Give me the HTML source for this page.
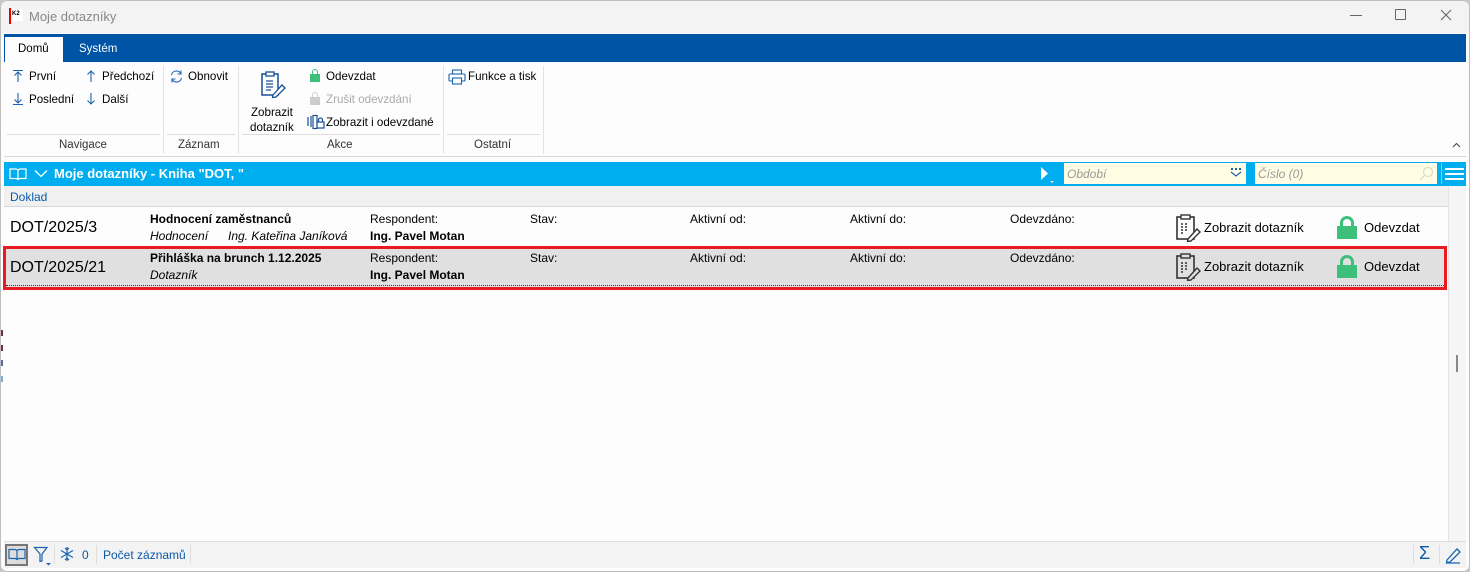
<!DOCTYPE html>
<html><head><meta charset="utf-8"><style>
*{margin:0;padding:0;box-sizing:border-box}
body{width:1470px;height:572px;overflow:hidden;background:#c8c8c8;font-family:"Liberation Sans","DejaVu Sans",sans-serif;font-size:12px;color:#000;position:relative}
.a{position:absolute;white-space:nowrap}
.win{position:absolute;left:0;top:0;width:1470px;height:572px;background:#fdfdfd;border-radius:7px;overflow:hidden}
.bd{position:absolute;left:0;top:0;width:1470px;height:572px;border:1px solid #bdbdbd;border-radius:7px;pointer-events:none}
.lbl{font-size:11.5px;color:#333}
.blue{color:#0a5aa8}
.s{font-size:11.6px}
svg{position:absolute}
</style></head><body>
<div class="win">
<div class="a" style="left:0;top:0;width:1470px;height:33px;background:#f3f3f3"></div>
<div class="a" style="left:9px;top:8px;width:2px;height:16px;background:#e00"></div>
<div class="a" style="left:12px;top:9px;width:11px;height:12px;background:#fff;font-size:6px;font-weight:bold;line-height:11px">K2</div>
<div class="a" style="left:29px;top:9px;font-size:13px;color:#888">Moje dotazníky</div>
<div class="a" style="left:1350px;top:15px;width:12px;height:1px;background:#666"></div>
<div class="a" style="left:1395px;top:9px;width:11px;height:11px;border:1px solid #666;border-radius:1px"></div>
<svg style="left:1440px;top:9px" width="12" height="12"><path d="M1 1L11 11M11 1L1 11" stroke="#666" stroke-width="1.1"/></svg>
<div class="a" style="left:4px;top:34px;width:1462px;height:28px;background:#0054a6"></div>
<div class="a" style="left:5px;top:37px;width:58px;height:25px;background:#fdfdfd"></div>
<div class="a" style="left:18px;top:43px;font-size:11.5px">Domů</div>
<div class="a" style="left:79px;top:43px;font-size:11.5px;color:#fff">Systém</div>
<div class="a" style="left:4px;top:62px;width:1462px;height:95px;background:#fdfdfd;border-bottom:1px solid #d8d8d8"></div>
<div class="a" style="left:163px;top:66px;width:1px;height:88px;background:#e2e2e2"></div>
<div class="a" style="left:238px;top:66px;width:1px;height:88px;background:#e2e2e2"></div>
<div class="a" style="left:443px;top:66px;width:1px;height:88px;background:#e2e2e2"></div>
<div class="a" style="left:543px;top:66px;width:1px;height:88px;background:#e2e2e2"></div>
<div class="a" style="left:7px;top:134px;width:153px;height:1px;background:#ddd"></div>
<div class="a" style="left:167px;top:134px;width:68px;height:1px;background:#ddd"></div>
<div class="a" style="left:242px;top:134px;width:198px;height:1px;background:#ddd"></div>
<div class="a" style="left:447px;top:134px;width:93px;height:1px;background:#ddd"></div>
<div class="a lbl" style="left:59px;top:139px">Navigace</div>
<div class="a lbl" style="left:178px;top:139px">Záznam</div>
<div class="a lbl" style="left:327px;top:139px">Akce</div>
<div class="a lbl" style="left:474px;top:139px">Ostatní</div>
<svg style="left:12px;top:69px" width="12" height="14"><path d="M1 1.5H11M6 3V13M2.5 6.5L6 3L9.5 6.5" stroke="#1a63b0" fill="none" stroke-width="1.1"/></svg>
<div class="a s" style="left:29px;top:70px">První</div>
<svg style="left:12px;top:92px" width="12" height="14"><path d="M1 12.5H11M6 1V11M2.5 7.5L6 11L9.5 7.5" stroke="#1a63b0" fill="none" stroke-width="1.1"/></svg>
<div class="a s" style="left:29px;top:93px">Poslední</div>
<svg style="left:85px;top:69px" width="12" height="14"><path d="M6 2V13M2.5 5.5L6 2L9.5 5.5" stroke="#1a63b0" fill="none" stroke-width="1.1"/></svg>
<div class="a s" style="left:102px;top:70px">Předchozí</div>
<svg style="left:85px;top:92px" width="12" height="14"><path d="M6 1V12M2.5 8.5L6 12L9.5 8.5" stroke="#1a63b0" fill="none" stroke-width="1.1"/></svg>
<div class="a s" style="left:102px;top:93px">Další</div>
<svg style="left:169px;top:69px" width="15" height="15"><path d="M2.5 6A5 5 0 0 1 12 5M12.5 9A5 5 0 0 1 3 10M12 1.5V5H8.5M3 13.5V10H6.5" stroke="#1a63b0" fill="none" stroke-width="1.1"/></svg>
<div class="a s" style="left:188px;top:70px">Obnovit</div>
<svg style="left:259px;top:71px" width="28" height="28"><rect x="3" y="3" width="16" height="21" fill="none" stroke="#1a4f96" stroke-width="1.5"/><rect x="7" y="1" width="8" height="4" fill="#fff" stroke="#1a4f96" stroke-width="1.3"/><path d="M7 10h7M7 13h7M7 16h7M7 19h5" stroke="#1a4f96" stroke-width="1.2"/><path d="M14 24L23 14L26 17L17 26L13.5 26.5Z" fill="#fff" stroke="#1a4f96" stroke-width="1.3"/></svg>
<div class="a s" style="left:250px;top:105px;text-align:center;line-height:15px">Zobrazit<br>dotazník</div>
<div class="a" style="left:310px;top:69px;width:10px;height:13px"><div style="position:absolute;left:2px;top:0;width:6px;height:7px;border:1.5px solid #3cc07a;border-bottom:none;border-radius:3px 3px 0 0"></div><div style="position:absolute;left:0;top:5px;width:10px;height:8px;background:#3cc07a"></div></div>
<div class="a s" style="left:326px;top:70px">Odevzdat</div>
<div class="a" style="left:310px;top:92px;width:10px;height:13px"><div style="position:absolute;left:2px;top:0;width:6px;height:7px;border:1.5px solid #ccc;border-bottom:none;border-radius:3px 3px 0 0"></div><div style="position:absolute;left:0;top:5px;width:10px;height:8px;background:#ccc"></div></div>
<div class="a s" style="left:326px;top:93px;color:#aaa">Zrušit odevzdání</div>
<svg style="left:305px;top:114px" width="20" height="16"><path d="M3 3V12M6 2V13" stroke="#1a4f96" fill="none" stroke-width="1.2"/><rect x="8" y="1.5" width="4" height="13" fill="none" stroke="#1a4f96" stroke-width="1.2"/><rect x="12" y="8" width="7" height="6" fill="#fff" stroke="#1a4f96" stroke-width="1.2"/><path d="M13.5 8V6a2 2 0 0 1 4 0V8" fill="none" stroke="#1a4f96" stroke-width="1.2"/></svg>
<div class="a s" style="left:326px;top:116px">Zobrazit i odevzdané</div>
<svg style="left:448px;top:69px" width="18" height="16"><rect x="4.5" y="1" width="9" height="4" fill="none" stroke="#1a63b0" stroke-width="1.1"/><rect x="1" y="5" width="16" height="7" rx="1" fill="none" stroke="#1a63b0" stroke-width="1.1"/><rect x="4.5" y="9" width="9" height="6" fill="#fff" stroke="#1a63b0" stroke-width="1.1"/></svg>
<div class="a s" style="left:468px;top:70px">Funkce a tisk</div>
<svg style="left:1452px;top:142px" width="9" height="6"><path d="M1 5L4.5 1.5L8 5" stroke="#444" fill="none"/></svg>
<div class="a" style="left:4px;top:162px;width:1462px;height:24px;background:#00aeef"></div>
<svg style="left:9px;top:167px" width="18" height="15"><path d="M1 2H7a2 2 0 0 1 2 2V13a2 2 0 0 0-2-1.5H1ZM17 2H11a2 2 0 0 0-2 2V13a2 2 0 0 1 2-1.5H17Z" fill="none" stroke="#fff" stroke-width="1.2"/></svg>
<svg style="left:34px;top:169px" width="14" height="9"><path d="M1 1.5L7 7.5L13 1.5" stroke="#fff" fill="none" stroke-width="1.3"/></svg>
<div class="a" style="left:54px;top:166px;font-size:13px;font-weight:bold;color:#fff">Moje dotazníky - Kniha "DOT, "</div>
<svg style="left:1040px;top:166px" width="16" height="18"><path d="M1 1L8 7.5L1 14Z" fill="#fff"/><path d="M10 15H14L12 17Z" fill="#fff"/></svg>
<div class="a" style="left:1064px;top:163px;width:182px;height:21px;background:#fffde3"></div>
<div class="a" style="left:1067px;top:167px;font-style:italic;color:#999">Období</div>
<svg style="left:1229px;top:167px" width="14" height="10"><path d="M2 1h2v2H2zM6 1h2v2H6zM10 1h2v2h-2z" fill="#1a63b0"/><path d="M2 5L7 9L12 5" stroke="#1a63b0" fill="none" stroke-width="1.2"/></svg>
<div class="a" style="left:1255px;top:163px;width:182px;height:21px;background:#fffde3"></div>
<div class="a" style="left:1258px;top:167px;font-style:italic;color:#999">Číslo (0)</div>
<svg style="left:1419px;top:166px" width="15" height="15"><circle cx="9" cy="6" r="4.5" fill="none" stroke="#dcdcc0" stroke-width="1.2"/><path d="M5.5 9.5L1.5 13.5" stroke="#dcdcc0" stroke-width="1.4"/></svg>
<div class="a" style="left:1441px;top:163px;width:1px;height:21px;background:#6fd0f6"></div>
<div class="a" style="left:1445px;top:168px;width:19px;height:2px;background:#fff"></div>
<div class="a" style="left:1445px;top:173px;width:19px;height:2px;background:#fff"></div>
<div class="a" style="left:1445px;top:178px;width:19px;height:2px;background:#fff"></div>
<div class="a" style="left:4px;top:186px;width:1444px;height:21px;background:#f0f0f0;border-bottom:1px solid #d6d6d6"></div>
<div class="a blue" style="left:10px;top:190px">Doklad</div>
<div class="a" style="left:1448px;top:186px;width:18px;height:355px;background:#f5f5f5;border-left:1px solid #e4e4e4"></div>
<div class="a" style="left:1456px;top:355px;width:2px;height:17px;background:#888"></div>
<div class="a" style="left:0;top:330px;width:3px;height:6px;background:#7a2a50"></div>
<div class="a" style="left:0;top:345px;width:3px;height:6px;background:#7a2a50"></div>
<div class="a" style="left:0;top:360px;width:3px;height:6px;background:#5a6a9a"></div>
<div class="a" style="left:0;top:376px;width:3px;height:6px;background:#7ab0d8"></div>
<div class="a" style="left:3px;top:246px;width:1444px;height:44px;border:3px solid #e81b23;background:#e0e0e0"></div>
<div class="a" style="left:6px;top:285px;width:1438px;height:1px;border-top:1px dotted #333"></div>
<div class="a" style="left:10px;top:219px;font-size:16px">DOT/2025/3</div>
<div class="a" style="left:150px;top:212px;font-weight:bold">Hodnocení zaměstnanců</div>
<div class="a" style="left:150px;top:229px;font-style:italic">Hodnocení</div>
<div class="a" style="left:228px;top:229px;font-style:italic">Ing. Kateřina Janíková</div>
<div class="a" style="left:370px;top:212px">Respondent:</div>
<div class="a" style="left:370px;top:229px;font-weight:bold">Ing. Pavel Motan</div>
<div class="a" style="left:530px;top:212px">Stav:</div>
<div class="a" style="left:690px;top:212px">Aktivní od:</div>
<div class="a" style="left:850px;top:212px">Aktivní do:</div>
<div class="a" style="left:1010px;top:212px">Odevzdáno:</div>
<div class="a" style="left:10px;top:259px;font-size:16px">DOT/2025/21</div>
<div class="a" style="left:150px;top:251px;font-weight:bold">Přihláška na brunch 1.12.2025</div>
<div class="a" style="left:150px;top:268px;font-style:italic">Dotazník</div>
<div class="a" style="left:370px;top:251px">Respondent:</div>
<div class="a" style="left:370px;top:268px;font-weight:bold">Ing. Pavel Motan</div>
<div class="a" style="left:530px;top:251px">Stav:</div>
<div class="a" style="left:690px;top:251px">Aktivní od:</div>
<div class="a" style="left:850px;top:251px">Aktivní do:</div>
<div class="a" style="left:1010px;top:251px">Odevzdáno:</div>
<svg style="left:1175px;top:214px" width="28" height="28"><rect x="2" y="3" width="17" height="22" fill="none" stroke="#333" stroke-width="1.6"/><rect x="6" y="1" width="9" height="4" fill="#fff" stroke="#333" stroke-width="1.4"/><path d="M6 10h2M10 10h2M6 13h2M10 13h2M6 16h2M10 16h2M6 19h2" stroke="#333" stroke-width="1.4"/><path d="M13 25L22 15L25 18L16 27L12.5 27.5Z" fill="#fff" stroke="#333" stroke-width="1.4"/></svg>
<div class="a" style="left:1204px;top:220px;font-size:13px">Zobrazit dotazník</div>
<svg style="left:1175px;top:253px" width="28" height="28"><rect x="2" y="3" width="17" height="22" fill="none" stroke="#333" stroke-width="1.6"/><rect x="6" y="1" width="9" height="4" fill="#e0e0e0" stroke="#333" stroke-width="1.4"/><path d="M6 10h2M10 10h2M6 13h2M10 13h2M6 16h2M10 16h2M6 19h2" stroke="#333" stroke-width="1.4"/><path d="M13 25L22 15L25 18L16 27L12.5 27.5Z" fill="#e0e0e0" stroke="#333" stroke-width="1.4"/></svg>
<div class="a" style="left:1204px;top:259px;font-size:13px">Zobrazit dotazník</div>
<div class="a" style="left:1337px;top:216px;width:20px;height:23px"><div style="position:absolute;left:3px;top:0;width:14px;height:12px;border:3px solid #3cc07a;border-bottom:none;border-radius:7px 7px 0 0"></div><div style="position:absolute;left:0;top:10px;width:20px;height:13px;background:#3cc07a"></div></div>
<div class="a" style="left:1364px;top:220px;font-size:13px">Odevzdat</div>
<div class="a" style="left:1337px;top:255px;width:20px;height:23px"><div style="position:absolute;left:3px;top:0;width:14px;height:12px;border:3px solid #3cc07a;border-bottom:none;border-radius:7px 7px 0 0"></div><div style="position:absolute;left:0;top:10px;width:20px;height:13px;background:#3cc07a"></div></div>
<div class="a" style="left:1364px;top:259px;font-size:13px">Odevzdat</div>
<div class="a" style="left:4px;top:541px;width:1462px;height:27px;background:#f3f3f3;border-top:1px solid #ddd"></div>
<div class="a" style="left:5px;top:544px;width:23px;height:22px;border:2px solid #777;background:#ddd"></div>
<svg style="left:8px;top:548px" width="18" height="14"><path d="M1 1.5H7a2 2 0 0 1 2 2V12a2 2 0 0 0-2-1.5H1ZM17 1.5H11a2 2 0 0 0-2 2V12a2 2 0 0 1 2-1.5H17Z" fill="none" stroke="#1a63b0" stroke-width="1.2"/></svg>
<svg style="left:33px;top:546px" width="20" height="20"><path d="M1.5 1.5H14L9 8V15L7 15.5V8Z" fill="none" stroke="#1a63b0" stroke-width="1.2"/><path d="M13 17H18L15.5 19.5Z" fill="#1a63b0"/></svg>
<div class="a" style="left:54px;top:545px;width:1px;height:19px;background:#ddd"></div>
<svg style="left:59px;top:546px" width="16" height="16"><path d="M8 1V15M2 4.5L14 11.5M14 4.5L2 11.5M6 2L8 4L10 2M6 14L8 12L10 14" stroke="#1a63b0" fill="none" stroke-width="1.2"/></svg>
<div class="a blue" style="left:82px;top:548px">0</div>
<div class="a" style="left:96px;top:545px;width:1px;height:19px;background:#ddd"></div>
<div class="a blue" style="left:103px;top:548px">Počet záznamů</div>
<div class="a" style="left:190px;top:545px;width:1px;height:19px;background:#ddd"></div>
<div class="a" style="left:1413px;top:545px;width:1px;height:19px;background:#ddd"></div>
<div class="a" style="left:1439px;top:545px;width:1px;height:19px;background:#ddd"></div>
<div class="a blue" style="left:1419px;top:543px;font-size:18px">Σ</div>
<svg style="left:1444px;top:546px" width="18" height="18"><path d="M3 14L13 3L16 6L6 16L2.5 16.5Z" fill="none" stroke="#1a63b0" stroke-width="1.3"/><path d="M2 17H16" stroke="#1a63b0" stroke-width="1.3"/></svg>
</div>
<div class="bd"></div>
</body></html>
